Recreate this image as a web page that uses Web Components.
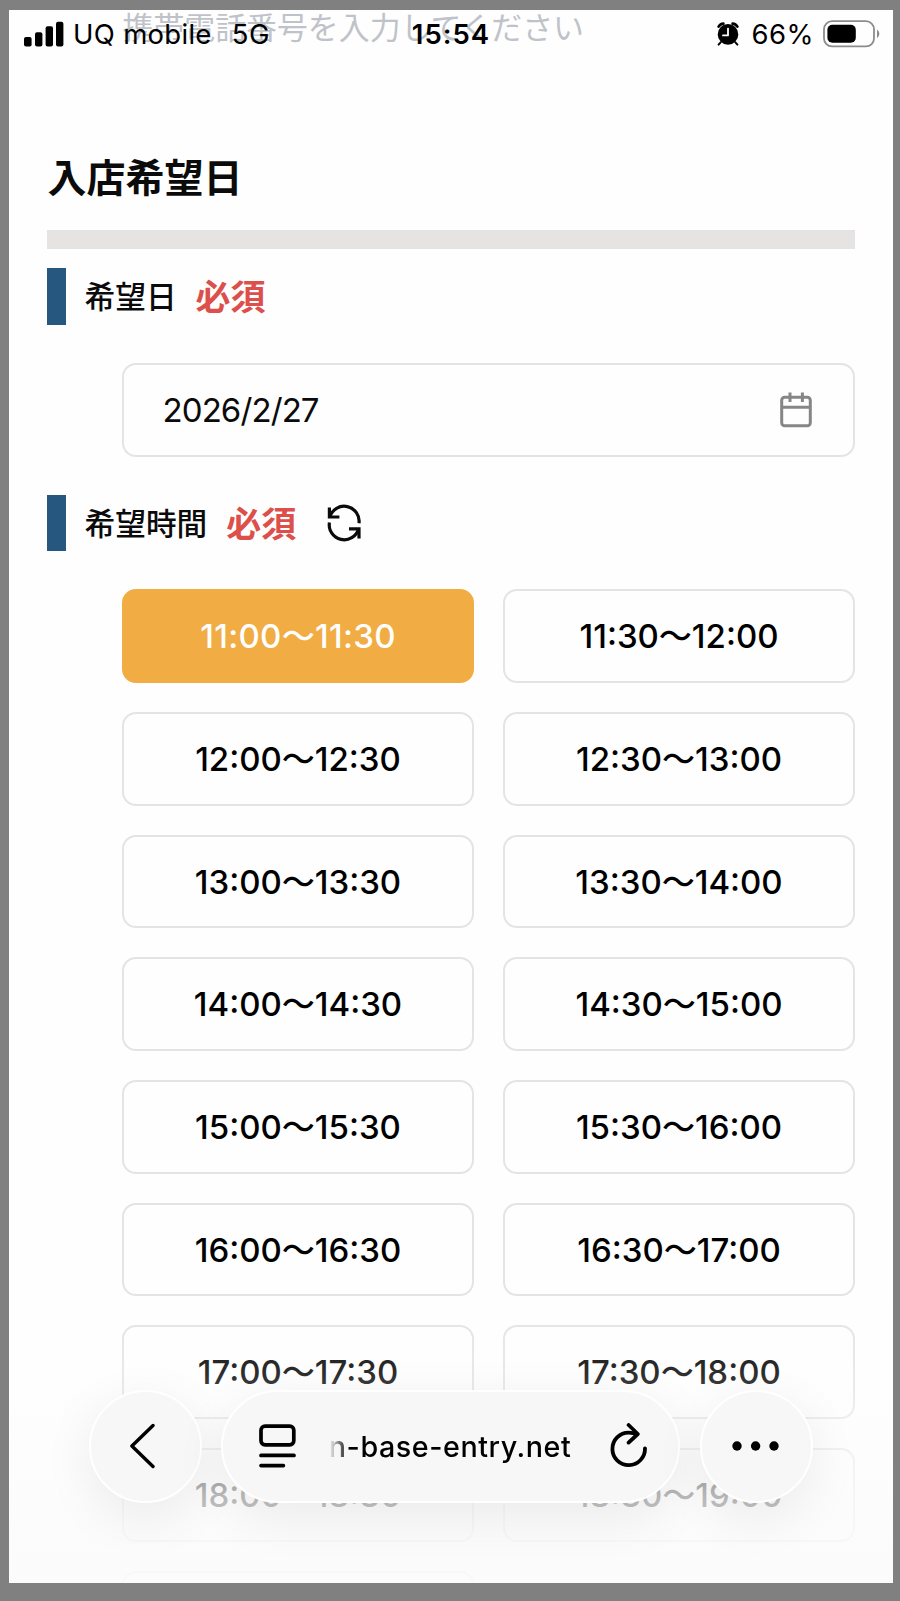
<!DOCTYPE html>
<html lang="ja">
<head>
<meta charset="UTF-8">
<title>入店希望日</title>
<style>
    body {
        margin: 0;
        background: #808080;
        font-family: Inter, "Noto Sans CJK JP", sans-serif;
        color: #0b0b0b;
    }
</style>
</head>
<body>
<phone-screen>
    <status-bar slot="status" carrier="UQ mobile" network="5G" time="15:54" battery="66%"></status-bar>
    <ghost-input>携帯電話番号を入力してください</ghost-input>
    <section-title>入店希望日</section-title>
    <field-label required="必須">希望日</field-label>
    <date-field>2026/2/27</date-field>
    <field-label required="必須" reload>希望時間</field-label>
    <time-slots selected="11:00〜11:30"></time-slots>
    <browser-bar slot="browser">n-base-entry.net</browser-bar>
</phone-screen>

<script>
class PhoneScreen extends HTMLElement {
    constructor() {
        super();
        this.attachShadow({ mode: "open" });
    }

    connectedCallback() {
        this.shadowRoot.innerHTML = `
            <style>
                :host { display: block; height: 1601px; box-sizing: border-box; padding: 10px 7px 18px 9px; }
                .screen { position: relative; height: 100%; overflow: hidden; background: #fefefe; }
                .page { display: flex; flex-direction: column; padding: 0 38px 0 37.5px; }
                .fade {
                    position: absolute; left: 0; right: 0; bottom: 0; height: 283px;
                    background: linear-gradient(rgba(254,254,254,0), rgba(253,253,253,.18) 26%, rgba(252,252,252,.74) 69%, rgba(251,251,251,.82) 84%, rgba(251,251,251,.9));
                }
                ::slotted([slot="status"]) { position: absolute; top: 0; left: 0; right: 0; }
                ::slotted([slot="browser"]) { position: absolute; bottom: 80.5px; left: 80px; }
            </style>
            <div class="screen">
                <div class="page"><slot></slot></div>
                <div class="fade"></div>
                <slot name="status"></slot>
                <slot name="browser"></slot>
            </div>
        `;
    }
}

class StatusBar extends HTMLElement {
    constructor() {
        super();
        this.attachShadow({ mode: "open" });
    }

    connectedCallback() {
        this.shadowRoot.innerHTML = `
            <style>
                :host { display: grid; grid-template-columns: 1fr auto 1fr; align-items: center; height: 48px; font-size: 27.5px; color: #000; white-space: nowrap; }
                .left, .right { display: flex; align-items: center; }
                .left { padding-left: 15px; }
                .right { justify-content: flex-end; padding-right: 13px; }
                .carrier { margin-left: 9px; letter-spacing: .3px; }
                .network { margin-left: 20px; letter-spacing: .5px; }
                .time { font-weight: 600; letter-spacing: 1px; }
                .percent { margin: 0 9px 0 12px; letter-spacing: .5px; }
                svg { display: block; }
            </style>
            <div class="left">
                <svg width="40" height="26" viewBox="0 0 40 26">
                    <rect x="0" y="16" width="7.6" height="9.4" rx="2"/>
                    <rect x="11" y="11.3" width="7.4" height="14.1" rx="2"/>
                    <rect x="21.6" y="5.3" width="7.4" height="20.1" rx="2"/>
                    <rect x="32" y=".8" width="7.4" height="24.6" rx="2"/>
                </svg>
                <span class="carrier">${this.getAttribute("carrier")}</span>
                <span class="network">${this.getAttribute("network")}</span>
            </div>
            <span class="time">${this.getAttribute("time")}</span>
            <div class="right">
                <svg width="22" height="24" viewBox="0 0 22 24">
                    <circle cx="11" cy="12.4" r="10.3"/>
                    <path d="M1.6 4.6Q3.2 1.8 6.4 1.6M20.4 4.6Q18.8 1.8 15.6 1.6" fill="none" stroke="#000" stroke-width="2.6" stroke-linecap="round"/>
                    <path d="M3.6 20.4L1.6 22.6M18.4 20.4l2 2.2" stroke="#000" stroke-width="2" stroke-linecap="round"/>
                    <path d="M11 6.6v6.8H6" fill="none" stroke="#fff" stroke-width="1.8" stroke-linecap="round" stroke-linejoin="round"/>
                </svg>
                <span class="percent">${this.getAttribute("battery")}</span>
                <svg width="57" height="28" viewBox="0 0 57 28">
                    <rect x="1" y="1.2" width="50" height="25.2" rx="8" fill="none" stroke="#8c8c8c" stroke-width="1.8"/>
                    <rect x="4.4" y="4.8" width="28.4" height="18" rx="5"/>
                    <path d="M54 9.4q2.4 1.6 2.4 4.4t-2.4 4.4z" fill="#8c8c8c"/>
                </svg>
            </div>
        `;
    }
}

// Placeholder of the phone number field that is scrolled under the status bar
class GhostInput extends HTMLElement {
    constructor() {
        super();
        this.attachShadow({ mode: "open" });
        this.shadowRoot.innerHTML = `
            <style>
                :host { display: block; height: 36px; line-height: 31px; padding-left: 76px; font-family: "Noto Sans CJK JP", sans-serif; font-size: 30.9px; font-weight: 400; color: #bfc3c9; white-space: nowrap; }
            </style>
            <slot></slot>
        `;
    }
}

class SectionTitle extends HTMLElement {
    constructor() {
        super();
        this.attachShadow({ mode: "open" });
        this.shadowRoot.innerHTML = `
            <style>
                :host { display: block; margin-top: 98.5px; }
                h2 { margin: 0; height: 60px; line-height: 60px; font-family: "Noto Sans CJK JP", sans-serif; font-size: 39px; font-weight: 700; padding-left: 1px; }
                .rule { height: 19px; margin-top: 25.8px; background: #e5e4e2; }
            </style>
            <h2><slot></slot></h2>
            <div class="rule"></div>
        `;
    }
}

class FieldLabel extends HTMLElement {
    constructor() {
        super();
        this.attachShadow({ mode: "open" });
    }

    connectedCallback() {
        const reload = this.hasAttribute("reload")
            ? `<svg width="34" height="34" viewBox="0 0 34 34" fill="none" stroke="#0b0b0b" stroke-width="3.2">
                   <path d="M2.4 1.4v9.6h10"/>
                   <path d="M2.8 10.8A15 15 0 0 1 32 17.2"/>
                   <path d="M32 32.4v-9.6H22"/>
                   <path d="M31.6 23A15 15 0 0 1 2.4 16.4"/>
               </svg>`
            : "";

        this.shadowRoot.innerHTML = `
            <style>
                :host { display: flex; align-items: center; height: 56.7px; margin-top: 19px; border-left: 19px solid #26577f; padding-left: 19px; font-family: "Noto Sans CJK JP", sans-serif; white-space: nowrap; }
                :host([reload]) { margin-top: 37.7px; }
                span { padding-bottom: 4px; }
                .name { font-size: 30.7px; font-weight: 500; }
                .required { margin-left: 19px; font-size: 35px; font-weight: 700; color: #dd4f4a; }
                svg { margin-left: 30.5px; overflow: visible; }
            </style>
            <span class="name"><slot></slot></span>
            <span class="required">${this.getAttribute("required")}</span>
            ${reload}
        `;
    }
}

class DateField extends HTMLElement {
    constructor() {
        super();
        this.attachShadow({ mode: "open" });
        this.shadowRoot.innerHTML = `
            <style>
                :host { display: flex; align-items: center; justify-content: space-between; box-sizing: border-box; height: 94px; margin: 38px 0 0 75.5px; padding: 0 41px 0 38.5px; border: 2px solid #e4e4e4; border-radius: 14px; font-size: 33px; letter-spacing: -.9px; }
            </style>
            <span><slot></slot></span>
            <svg width="32" height="36" viewBox="0 0 32 36" fill="none" stroke="#868686" stroke-width="3">
                <rect x="1.7" y="5.3" width="28.6" height="28.4" rx="3"/>
                <path d="M1.7 15.2h28.6M10 .5v9.5M22.4 .5v9.5"/>
            </svg>
        `;
    }
}

class TimeSlot extends HTMLElement {
    constructor() {
        super();
        this.attachShadow({ mode: "open" });
        this.shadowRoot.innerHTML = `
            <style>
                :host { display: flex; align-items: center; justify-content: center; box-sizing: border-box; height: 93.7px; padding-bottom: 4px; border: 2px solid #e4e4e4; border-radius: 14px; font-size: 33px; font-weight: 500; color: #000; white-space: nowrap; }
                :host([selected]) { border-color: #f1ad43; background: #f1ad43; color: #fff; letter-spacing: .3px; }
            </style>
            <slot></slot>
        `;
    }
}

class TimeSlots extends HTMLElement {
    constructor() {
        super();
        this.attachShadow({ mode: "open" });
        this.slots = [
            "11:00〜11:30", "11:30〜12:00",
            "12:00〜12:30", "12:30〜13:00",
            "13:00〜13:30", "13:30〜14:00",
            "14:00〜14:30", "14:30〜15:00",
            "15:00〜15:30", "15:30〜16:00",
            "16:00〜16:30", "16:30〜17:00",
            "17:00〜17:30", "17:30〜18:00",
            "18:00〜18:30", "18:30〜19:00",
            ""
        ];
    }

    connectedCallback() {
        const selected = this.getAttribute("selected");

        this.shadowRoot.innerHTML = `
            <style>
                :host { display: grid; grid-template-columns: 1fr 1fr; gap: 29px; margin: 38px 0 0 75.5px; }
            </style>
            ${this.slots
                .map((slot) => `<time-slot ${slot === selected ? "selected" : ""}>${slot}</time-slot>`)
                .join("")}
        `;
    }
}

class BrowserBar extends HTMLElement {
    constructor() {
        super();
        this.attachShadow({ mode: "open" });
        this.shadowRoot.innerHTML = `
            <style>
                :host { display: flex; gap: 19.3px; color: #000; }
                .pill { display: flex; align-items: center; justify-content: center; box-sizing: border-box; width: 113px; height: 113px; border: 2px solid #fff; border-radius: 57px; background: #f7f7f7; box-shadow: 0 14px 52px rgba(0, 0, 0, .075); }
                .address { width: 459px; justify-content: flex-start; padding-left: 35.5px; }
                .url { margin-left: 33px; width: 246px; font-size: 28.7px; font-weight: 500; letter-spacing: .55px; white-space: nowrap; -webkit-mask-image: linear-gradient(90deg, transparent, #000 20px); mask-image: linear-gradient(90deg, transparent, #000 20px); }
                .reload { margin-left: 35px; }
                svg { display: block; flex: none; fill: none; stroke: #000; stroke-linecap: round; stroke-linejoin: round; }
            </style>
            <div class="pill">
                <svg width="32" height="46" viewBox="0 0 32 46" stroke-width="3.4"><path d="M23 2.5L1.9 23L23 43.5"/></svg>
            </div>
            <div class="pill address">
                <svg width="37" height="44" viewBox="0 0 37 44" stroke-width="3.7">
                    <rect x="2" y="2.2" width="32.8" height="18.6" rx="4"/>
                    <path d="M2 31.4h33M2 41.6h22.4"/>
                </svg>
                <span class="url"><slot></slot></span>
                <svg class="reload" width="38" height="46" viewBox="0 0 38 46" stroke-width="3.8">
                    <path d="M35 25.3A16.3 16.3 0 1 1 18.7 9.6Q23 9.6 26.8 11.4"/>
                    <path d="M18.6 2l9.2 9L18.6 19.6"/>
                </svg>
            </div>
            <div class="pill">
                <svg width="50" height="12" viewBox="0 0 50 12" style="fill:#000;stroke:none">
                    <circle cx="6" cy="6" r="4.7"/>
                    <circle cx="24.6" cy="6" r="4.7"/>
                    <circle cx="43" cy="6" r="4.7"/>
                </svg>
            </div>
        `;
    }
}

customElements.define("status-bar", StatusBar);
customElements.define("ghost-input", GhostInput);
customElements.define("section-title", SectionTitle);
customElements.define("field-label", FieldLabel);
customElements.define("date-field", DateField);
customElements.define("time-slot", TimeSlot);
customElements.define("time-slots", TimeSlots);
customElements.define("browser-bar", BrowserBar);
customElements.define("phone-screen", PhoneScreen);
</script>
</body>
</html>
